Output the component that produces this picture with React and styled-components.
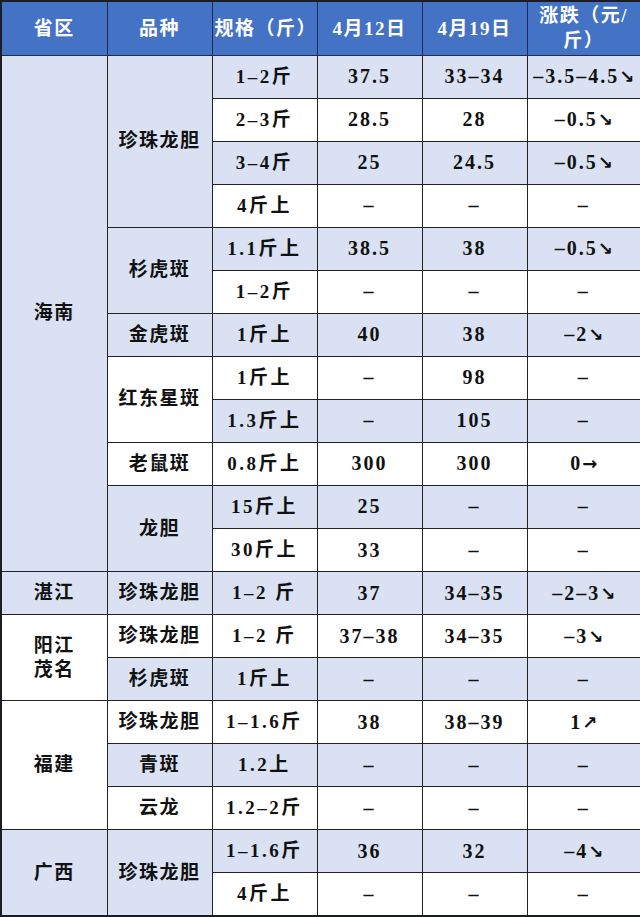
import React from 'react';
import styled, { createGlobalStyle } from 'styled-components';

const Global = createGlobalStyle`
  html, body {
    margin: 0;
    padding: 0;
    background: #ffffff;
  }
`;

const Table = styled.table`
  width: 640px;
  height: 917px;
  border-collapse: collapse;
  table-layout: fixed;
  font-family: "Liberation Serif", "Noto Sans CJK SC", serif;
  font-weight: bold;
  font-size: 19px;
  color: #111;
  text-align: center;
  border: 2px solid #1c1c24;
`;

const Col = styled.col`
  width: ${p => p.$w}px;
`;

const HeadRow = styled.tr`
  height: 54px;
`;

const HeadCell = styled.th`
  background: #4472c4;
  color: #ffffff;
  font-weight: bold;
  font-size: 19px;
  line-height: 25px;
  letter-spacing: 1.5px;
  border: 1.5px solid #1d2c52;
  padding: 0 2px;
`;

const Row = styled.tr`
  height: 43px;
`;

const Cell = styled.td`
  background: ${p => (p.$shade ? '#d9e1f2' : '#ffffff')};
  border: 1.5px solid #222;
  padding: 0 1px;
  line-height: 24px;
  white-space: nowrap;
  letter-spacing: ${p => (p.$wide ? '2.5px' : '1.5px')};
`;

const Num = styled.span`
  font-size: 20px;
  letter-spacing: 2px;
  font-weight: bold;
`;

const Arrow = styled.span`
  font-family: "DejaVu Sans", sans-serif;
  font-size: 18px;
  letter-spacing: 0;
  font-weight: bold;
`;

const widths = [106, 105, 105, 105, 105, 114];

// each row: province / variety (with rowspan), spec, 4月12日, 4月19日, change
const rows = [
  { prov: ['海南', 12], kind: ['珍珠龙胆', 4], spec: '1–2斤', a: '37.5', b: '33–34', c: '–3.5–4.5', arr: '↘' },
  { spec: '2–3斤', a: '28.5', b: '28', c: '–0.5', arr: '↘' },
  { spec: '3–4斤', a: '25', b: '24.5', c: '–0.5', arr: '↘' },
  { spec: '4斤上', a: '–', b: '–', c: '–' },
  { kind: ['杉虎斑', 2], spec: '1.1斤上', a: '38.5', b: '38', c: '–0.5', arr: '↘' },
  { spec: '1–2斤', a: '–', b: '–', c: '–' },
  { kind: ['金虎斑', 1], spec: '1斤上', a: '40', b: '38', c: '–2', arr: '↘' },
  { kind: ['红东星斑', 2], spec: '1斤上', a: '–', b: '98', c: '–' },
  { spec: '1.3斤上', a: '–', b: '105', c: '–' },
  { kind: ['老鼠斑', 1], spec: '0.8斤上', a: '300', b: '300', c: '0', arr: '→' },
  { kind: ['龙胆', 2], spec: '15斤上', a: '25', b: '–', c: '–' },
  { spec: '30斤上', a: '33', b: '–', c: '–' },
  { prov: ['湛江', 1], kind: ['珍珠龙胆', 1], spec: '1–2 斤', a: '37', b: '34–35', c: '–2–3', arr: '↘' },
  { prov: ['阳江\n茂名', 2], kind: ['珍珠龙胆', 1], spec: '1–2 斤', a: '37–38', b: '34–35', c: '–3', arr: '↘' },
  { kind: ['杉虎斑', 1], spec: '1斤上', a: '–', b: '–', c: '–' },
  { prov: ['福建', 3], kind: ['珍珠龙胆', 1], spec: '1–1.6斤', a: '38', b: '38–39', c: '1', arr: '↗' },
  { kind: ['青斑', 1], spec: '1.2上', a: '–', b: '–', c: '–' },
  { kind: ['云龙', 1], spec: '1.2–2斤', a: '–', b: '–', c: '–' },
  { prov: ['广西', 2], kind: ['珍珠龙胆', 2], spec: '1–1.6斤', a: '36', b: '32', c: '–4', arr: '↘' },
  { spec: '4斤上', a: '–', b: '–', c: '–' },
];

function Multi({ text }) {
  return text.split('\n').map((t, i) => (
    <React.Fragment key={i}>
      {i > 0 && <br />}
      {t}
    </React.Fragment>
  ));
}

export default function App() {
  return (
    <>
      <Global />
      <Table>
        <colgroup>
          {widths.map((w, i) => <Col key={i} $w={w} />)}
        </colgroup>
        <thead>
          <HeadRow>
            <HeadCell>省区</HeadCell>
            <HeadCell>品种</HeadCell>
            <HeadCell>规格（斤）</HeadCell>
            <HeadCell>4月12日</HeadCell>
            <HeadCell>4月19日</HeadCell>
            <HeadCell>涨跌（元/<br />斤）</HeadCell>
          </HeadRow>
        </thead>
        <tbody>
          {rows.map((r, i) => {
            const shade = i % 2 === 0;
            return (
              <Row key={i}>
                {r.prov && (
                  <Cell $shade={shade} rowSpan={r.prov[1]}>
                    <Multi text={r.prov[0]} />
                  </Cell>
                )}
                {r.kind && (
                  <Cell $shade={shade} rowSpan={r.kind[1]}>{r.kind[0]}</Cell>
                )}
                <Cell $shade={shade} $wide>{r.spec}</Cell>
                <Cell $shade={shade}><Num>{r.a}</Num></Cell>
                <Cell $shade={shade}><Num>{r.b}</Num></Cell>
                <Cell $shade={shade}>
                  <Num>{r.c}</Num>
                  {r.arr && <Arrow>{r.arr}</Arrow>}
                </Cell>
              </Row>
            );
          })}
        </tbody>
      </Table>
    </>
  );
}
